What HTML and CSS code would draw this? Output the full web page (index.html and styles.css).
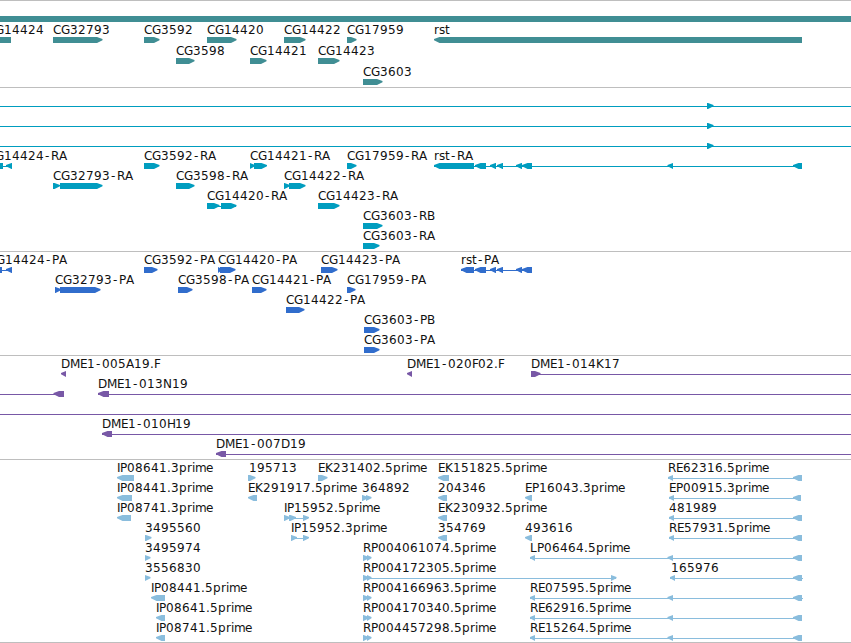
FILE: index.html
```
<!DOCTYPE html>
<html lang="en">
<head>
<meta charset="utf-8">
<title>Genome region</title>
<link rel="stylesheet" href="styles.css">
</head>
<body>
<main class="browser" id="browser"></main>
<script src="script.js"></script>
</body>
</html>
```
FILE: styles.css
```
body {
  margin: 0;
  background: #fff;
}

.browser {
  display: flex;
  flex-direction: column;
  width: 851px;
  height: 643px;
  overflow: hidden;
}

.track {
  display: block;
  flex: none;
  box-sizing: border-box;
  width: 851px;
  border-top: 1px solid #bebebe;
  overflow: hidden;
}

.track:last-child {
  border-bottom: 1px solid #bebebe;
}

.track text {
  font: 12px "DejaVu Sans", sans-serif;
  fill: #111;
}

.genes { fill: #408e94; }
.transcripts { fill: #009dbf; }
.proteins { fill: #316dcc; }
.clones { fill: #7858a6; }
.ests { fill: #8abddd; }
```
FILE: script.js
```
// Advance of each glyph, in whole pixels; digits use the default.
const ADVANCE = { C: 8, G: 9, R: 8, P: 7, A: 8, B: 8, D: 9, M: 10, E: 7, F: 6, H: 8, I: 3, K: 8, L: 7, N: 9,
  '-': 7, '.': 4, p: 8, r: 5, i: 3, m: 11, e: 7, s: 6, t: 5 };

const NS = 'http://www.w3.org/2000/svg';

// A feature is [label, labelX, boxes, line]; a box is [start, end, direction].
const R = 1, L = -1, N = 0;
const one = (label, a, b, d) => [label, a, [[a, b, d]]];
const rp = label => [label, 363, [[363, 369, R], [367, 371.5, R]]];
const far = (label, x, end = 802) => [label, x, [[x, x + 5, L], [793, Math.min(end, 802), L]], [x, end]];
const long = (label, end = 802) => [label, 530, [[530, 535, L], [667.5, 673, L], [793, 802, L]], [530, end]];
const through = ['', 0, [[707, 713.5, R]], [0, 851]];
const rstExons = [[475, 486, L], [490, 496, L], [497, 503, L], [516, 522, L], [522, 532, L]];

const tracks = [
  { name: 'genes', height: 87, first: 37, pitch: 21, rows: [
    [['CG14424', -13, [[-13, 11, N]]], one('CG32793', 53, 102.5, R), one('CG3592', 144, 159.5, R),
      one('CG14420', 207, 236.5, R), one('CG14422', 284, 305.5, R), one('CG17959', 347, 356.5, R), one('rst', 434, 802, L)],
    [one('CG3598', 176, 194.5, R), one('CG14421', 250, 266.5, R), one('CG14423', 318, 339.5, R)],
    [one('CG3603', 363, 382.5, R)]
  ] },
  { name: 'transcripts', height: 164, first: 16, pitch: 20, rows: [
    [through], [through], [through],
    [['CG14424-RA', -13, [[-13, 3, N], [6, 12, L]], [0, 12]], one('CG3592-RA', 144, 159.5, R),
      ['CG14421-RA', 250, [[250, 255, R], [254, 267, R]]], one('CG17959-RA', 347, 356.5, R),
      ['rst-RA', 434, [[434, 474, L], ...rstExons, [667.5, 673, L], [793, 802, L]], [434, 802]]],
    [['CG32793-RA', 53, [[53, 60, R], [60, 102.5, R]]], one('CG3598-RA', 176, 194.5, R),
      ['CG14422-RA', 284, [[284, 290, R], [289, 305.5, R]]]],
    [['CG14420-RA', 207, [[207, 219.5, R], [221, 236.5, R]], [207, 236]], one('CG14423-RA', 318, 339.5, R)],
    [one('CG3603-RB', 363, 382.5, R)],
    [one('CG3603-RA', 363, 379.5, R)]
  ] },
  { name: 'proteins', height: 104, first: 16, pitch: 20, rows: [
    [['CG14424-PA', -12, [[-12, 2, N], [6, 12, L]], [0, 12]], one('CG3592-PA', 144, 157.5, R),
      ['CG14420-PA', 218, [[218, 222, R], [220, 235.5, R]]], one('CG14423-PA', 321, 337.5, R),
      ['rst-PA', 461, [[461, 474, L], ...rstExons], [461, 532]]],
    [['CG32793-PA', 55, [[55, 61, R], [60, 100.5, R]]], one('CG3598-PA', 178, 192.5, R),
      one('CG14421-PA', 252, 266.5, R), one('CG17959-PA', 347, 355.5, R)],
    [one('CG14422-PA', 286, 304.5, R)],
    [one('CG3603-PB', 364, 379.5, R)],
    [one('CG3603-PA', 364, 379.5, R)]
  ] },
  { name: 'clones', height: 104, first: 16, pitch: 20, rows: [
    [one('DME1-005A19.F', 61, 66, L), one('DME1-020F02.F', 407, 412, L), ['DME1-014K17', 531, [[531, 540.5, R]], [531, 851]]],
    [['', 0, [[53.5, 64, L]], [0, 64]], ['DME1-013N19', 98, [[98, 109, L]], [98, 851]]],
    [['', 0, [], [0, 851]]],
    [['DME1-010H19', 102, [[102, 112, L]], [102, 851]]],
    [['DME1-007D19', 216, [[216, 226, L]], [216, 851]]]
  ] },
  { name: 'ests', height: 184, first: 16, pitch: 20, rows: [
    [one('IP08641.3prime', 117, 134, L), ['195713', 249, [[248, 255.5, R]]], one('EK231402.5prime', 318, 327.5, R),
      one('EK151825.5prime', 438, 449, L), far('RE62316.5prime', 668)],
    [one('IP08441.3prime', 117, 132, L), one('EK291917.5prime', 248, 257, L), ['364892', 362, [[362, 368, R], [366, 371.5, R]]],
      one('204346', 438, 447, L), one('EP16043.3prime', 525, 532, L), far('EP00915.3prime', 669, 801)],
    [one('IP08741.3prime', 117, 131, L), ['IP15952.5prime', 284, [[284, 290, R], [289, 296, R], [303, 309, R]], [284, 308]],
      one('EK230932.5prime', 438, 447, L), far('481989', 669)],
    [one('3495560', 145, 151.5, R), ['IP15952.3prime', 291, [[291, 297, R], [303, 309, R]], [291, 308]],
      one('354769', 438, 447, L), one('493616', 525, 532, L), far('RE57931.5prime', 669)],
    [one('3495974', 145, 150.5, R), rp('RP004061074.5prime'), long('LP06464.5prime')],
    [one('3556830', 145, 150.5, R), ['RP004172305.5prime', 363, [[363, 369, R], [367, 371.5, R], [611, 616.5, R]], [363, 616]],
      ['165976', 671, [[670, 675, L], [793, 802, L]], [670, 803]]],
    [one('IP08441.5prime', 151, 165, L), rp('RP004166963.5prime'), long('RE07595.5prime', 803)],
    [one('IP08641.5prime', 156, 165, L), rp('RP004170340.5prime'), long('RE62916.5prime')],
    [one('IP08741.5prime', 156, 165, L), rp('RP004457298.5prime'), long('RE15264.5prime')]
  ] }
];

function add(parent, tag, attributes) {
  const node = document.createElementNS(NS, tag);
  for (const key in attributes) node.setAttribute(key, attributes[key]);
  parent.appendChild(node);
  return node;
}

function box(svg, [start, end, direction], y) {
  if (direction === N) {
    add(svg, 'rect', { x: start, y, width: end - start, height: 6 });
    return;
  }
  const tip = Math.min(5.5, end - start);
  const [back, neck, head] = direction === R ? [start, end - tip, end] : [end, start + tip, start];
  add(svg, 'polygon', {
    points: `${back},${y} ${neck},${y} ${head},${y + 2.1} ${head},${y + 3.3} ${neck},${y + 6} ${back},${y + 6}`
  });
}

function label(svg, text, x, y) {
  const xs = [];
  for (const glyph of text) {
    // The hyphen is narrower than its cell, so it is centred there.
    xs.push(glyph === '-' ? x + 1 : x);
    x += ADVANCE[glyph] || 8;
  }
  add(svg, 'text', { x: xs.join(' '), y }).textContent = text;
}

const browser = document.getElementById('browser');
for (const track of tracks) {
  const svg = add(browser, 'svg', { class: `track ${track.name}` });
  svg.style.height = `${track.height}px`;
  if (track.name === 'genes') add(svg, 'rect', { x: 0, y: 15, width: 851, height: 6 });
  track.rows.forEach((row, index) => {
    const y = track.first - 1 + index * track.pitch;
    for (const [text, x, boxes, line] of row) {
      if (line) add(svg, 'rect', { x: line[0], y: y + 3, width: line[1] - line[0], height: 1 });
      boxes.forEach(b => box(svg, b, y));
      if (text) label(svg, text, x, y - 3);
    }
  });
}
```
